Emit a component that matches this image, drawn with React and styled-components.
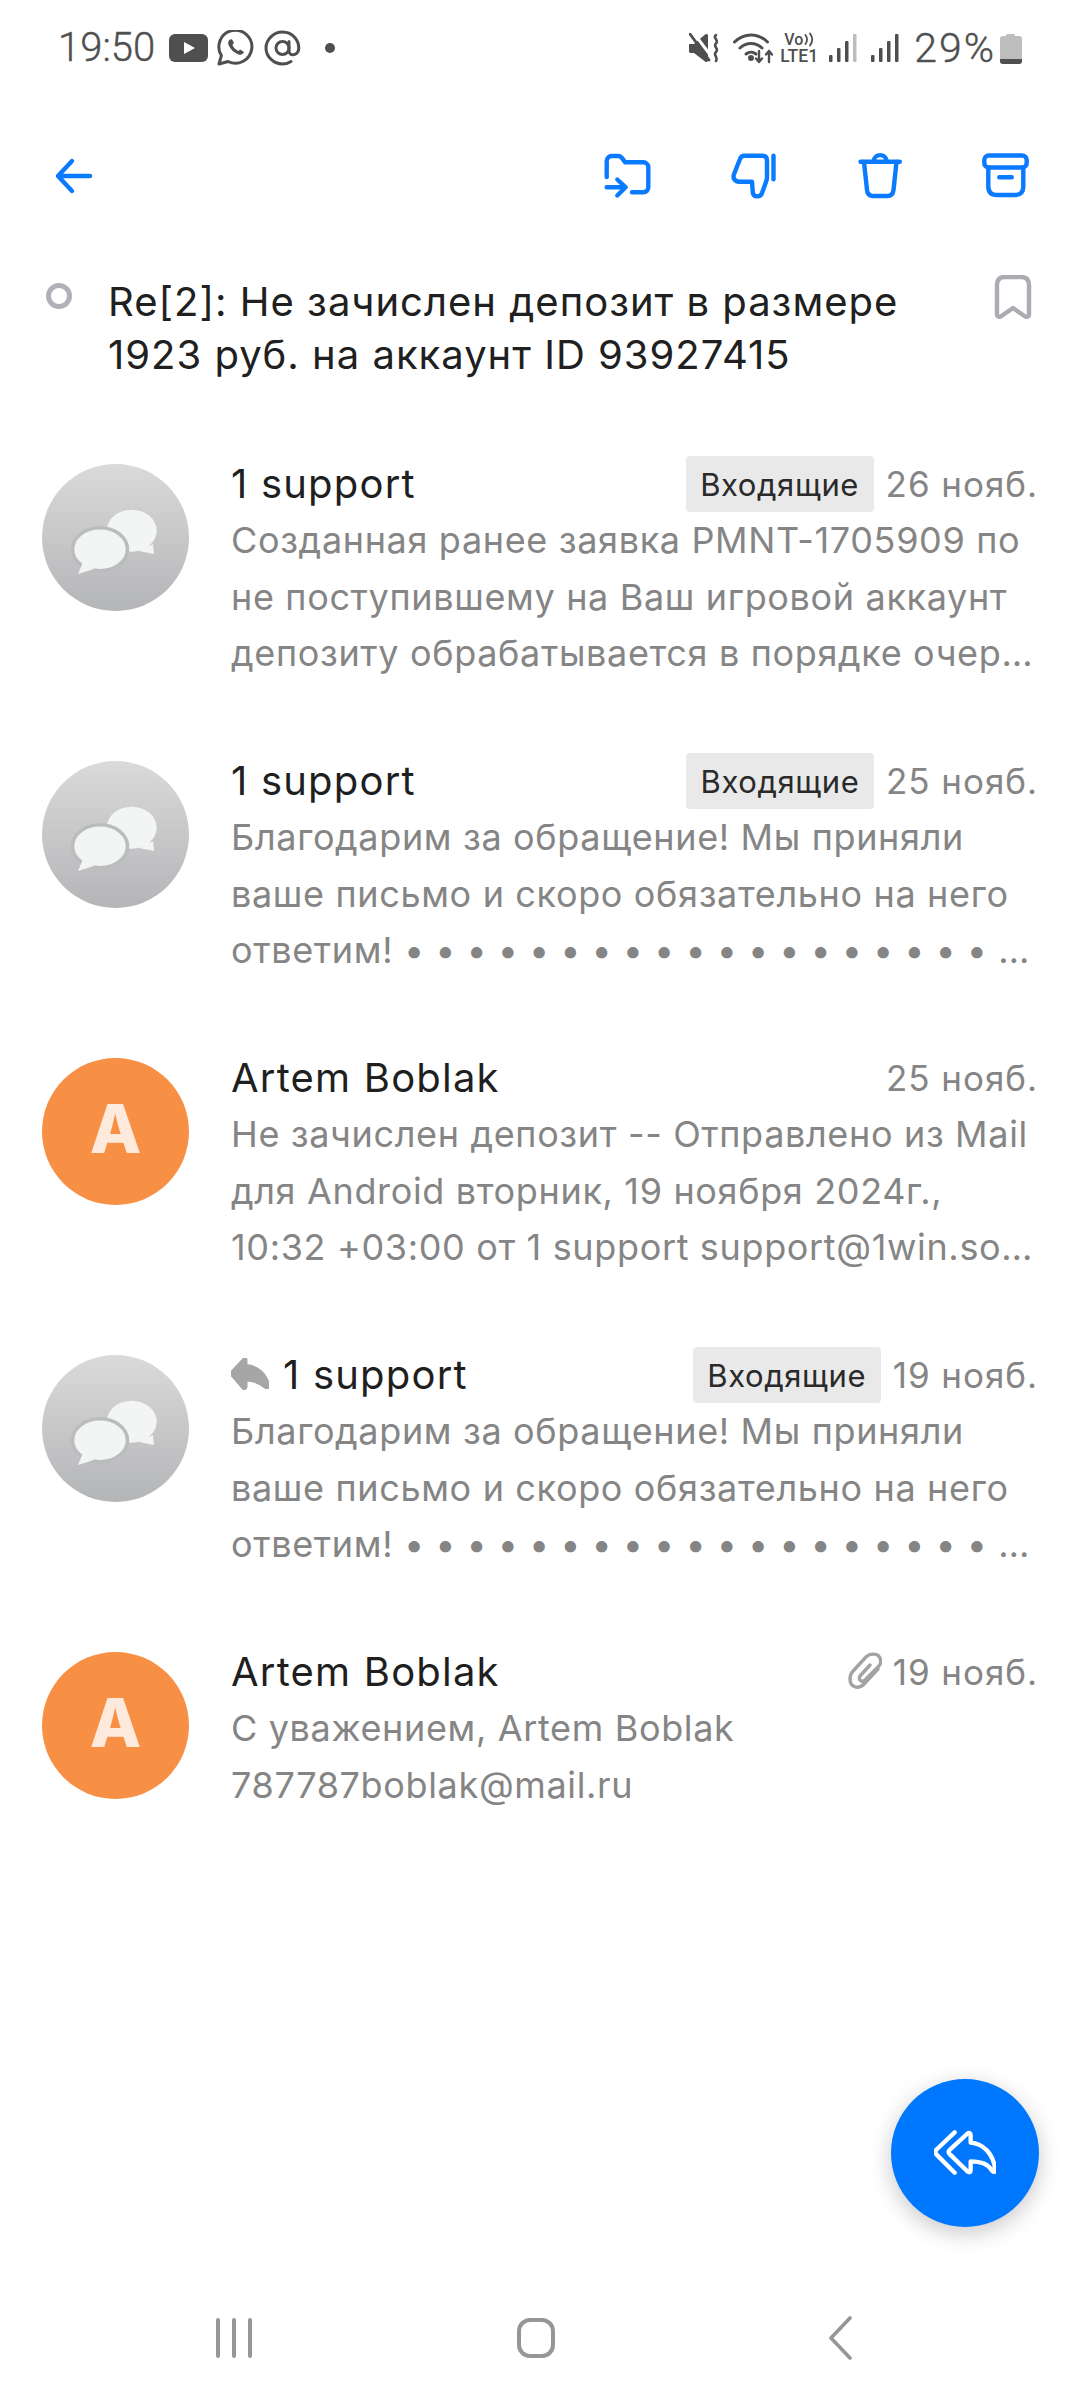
import React from "react";
import styled, { createGlobalStyle } from "styled-components";

const GlobalStyle = createGlobalStyle`
  html, body { margin: 0; padding: 0; background: #fff; }
  * { box-sizing: border-box; }
`;

const Page = styled.div`
  position: relative;
  width: 1080px;
  height: 2400px;
  display: flex;
  flex-direction: column;
  background: #fff;
  overflow: hidden;
  font-family: Inter, "Noto Sans", sans-serif;
`;

const StatusBar = styled.div`
  height: 96px;
  padding: 0 58px 0 58px;
  display: flex;
  align-items: center;
  justify-content: space-between;
  color: #4f4f4f;
  font-family: Roboto, sans-serif;
  font-size: 40px;
`;

const StatusGroup = styled.div`
  display: flex;
  align-items: center;
`;

const StatusSlot = styled.span`
  display: flex;
  margin-left: ${(p) => p.$left || 0}px;
`;

const StatusText = styled.span`
  line-height: 48px;
  font-weight: 300;
  font-size: ${(p) => (p.$wide ? 41 : 40)}px;
  letter-spacing: ${(p) => (p.$wide ? 2 : 0)}px;
  -webkit-text-stroke: 0.4px #4f4f4f;
`;

const Volte = styled.div`
  width: 40px;
  display: flex;
  flex-direction: column;
  align-items: center;
  font-weight: 500;
  color: #4f4f4f;
`;

const VolteTop = styled.div`
  display: flex;
  align-items: center;
  gap: 1px;
  height: 16px;
  font-size: 16px;
  line-height: 16px;
`;

const VolteBottom = styled.div`
  height: 17px;
  font-size: 17.5px;
  line-height: 17px;
`;

const Toolbar = styled.div`
  height: 160px;
  padding: 0 51px 0 54px;
  display: flex;
  align-items: center;
  justify-content: space-between;
`;

const ToolbarActions = styled.div`
  display: flex;
  gap: 78px;
`;

const Stroke = styled.svg`
  display: block;
  fill: none;
  stroke: ${(p) => p.$color || "#0a7aff"};
  stroke-width: ${(p) => p.$sw || 4.4};
  stroke-linecap: round;
  stroke-linejoin: round;
`;

const Subject = styled.div`
  padding: 19px 48px 73px 46px;
  display: flex;
  align-items: flex-start;
`;

const UnreadRing = styled.div`
  flex: none;
  width: 26px;
  height: 26px;
  margin-top: 8px;
  border: 5px solid #b0b1b6;
  border-radius: 50%;
`;

const SubjectText = styled.div`
  flex: 1;
  margin-left: 36px;
  font-size: 40px;
  line-height: 53px;
  letter-spacing: 1px;
  color: #202020;
`;

const List = styled.div`
  flex: 1;
`;

const Row = styled.div`
  height: 297px;
  padding: 0 42px;
  display: flex;
  gap: 42px;
`;

const AvatarCircle = styled.div`
  flex: none;
  width: 147px;
  height: 147px;
  margin-top: 10px;
  border-radius: 50%;
  display: flex;
  align-items: center;
  justify-content: center;
  background: ${(p) => (p.$orange ? "#f79044" : "linear-gradient(#dadada, #b4b5b7)")};
  padding-bottom: ${(p) => (p.$orange ? 6 : 0)}px;
  color: #fdeadd;
  font-size: 67px;
  font-weight: 800;
`;

const RowBody = styled.div`
  flex: 1;
  min-width: 0;
`;

const RowHead = styled.div`
  height: 58px;
  display: flex;
  align-items: center;
`;

const Name = styled.div`
  flex: 1;
  font-size: 40px;
  letter-spacing: 1.2px;
  color: #1f1f1f;
`;

const Tag = styled.div`
  width: 188px;
  height: 56px;
  margin: 2px 12px 0 0;
  border-radius: 4px;
  background: #e9e9e9;
  color: #2a2a2a;
  font-size: 31px;
  letter-spacing: 0.6px;
  display: flex;
  align-items: center;
  justify-content: center;
`;

const DateText = styled.div`
  margin-top: 1px;
  font-size: 35px;
  letter-spacing: 0.95px;
  color: #858585;
`;

const PreviewLine = styled.div`
  height: 56.5px;
  line-height: 56.5px;
  font-size: 36px;
  letter-spacing: 0.65px;
  color: #858585;
  white-space: nowrap;
`;

const Dots = styled.span`
  letter-spacing: 0.45px;
`;

const Fab = styled.div`
  position: absolute;
  right: 41px;
  bottom: 173px;
  width: 148px;
  height: 148px;
  border-radius: 50%;
  background: #0077ff;
  box-shadow: 0 6px 22px rgba(0, 0, 0, 0.22);
  display: flex;
  align-items: center;
  justify-content: center;
`;

const NavBar = styled.div`
  height: 124px;
  padding: 0 228px 0 216px;
  display: flex;
  align-items: center;
  justify-content: space-between;
`;

const NavBars = styled.div`
  width: 36px;
  height: 40px;
  display: flex;
  justify-content: space-between;
`;

const NavBarLine = styled.div`
  width: 4px;
  border-radius: 2px;
  background: #969696;
`;

const NavHome = styled.div`
  width: 38px;
  height: 40px;
  margin-right: 8px;
  border: 4px solid #969696;
  border-radius: 13px;
`;

const YoutubeIcon = () => (
  <svg width="39" height="28" viewBox="0 0 39 28">
    <rect width="39" height="28" rx="6" fill="#4f4f4f" />
    <path d="M15 8l11 6-11 6z" fill="#fff" />
  </svg>
);

const WhatsappIcon = () => (
  <Stroke $color="#4f4f4f" $sw="3" width="38" height="36" viewBox="0 0 38 36">
    <path d="M2 34l2.400-8.500A16.500 16.500 0 1 1 11 31.500z" />
    <path d="M13 9.500c-2 1.500-2.500 3.500-1 6.500 2 4 5.500 7 9.500 8.500 2.500.8 4.500 0 5.500-2.500l-3.800-2.600-2 1.500c-2.500-1-4.800-3.300-5.800-5.800l1.500-2-2-3.800z" fill="#4f4f4f" stroke="none" />
  </Stroke>
);

const AtIcon = () => (
  <Stroke $color="#4f4f4f" $sw="3" width="37" height="36" viewBox="0 0 37 36">
    <circle cx="18.500" cy="18" r="6.500" />
    <path d="M25 11.500V21c0 5 7.500 5 9.500-.500C36 11 29 2 18.500 2 9.500 2 2 9.500 2 18s7.500 16 16.500 16c3.500 0 6-.8 8.500-2.500" />
  </Stroke>
);

const MuteIcon = () => (
  <svg width="30" height="30" viewBox="0 0 30 30">
    <path d="M0 11h5L16 1.500c1-1 3-.5 3 1v25c0 1.500-2 2-3 1L5 20H1.500C.5 20 0 19.300 0 18z" fill="#4f4f4f" />
    <path d="M4 -1L25 27" stroke="#fff" strokeWidth="3" />
    <path d="M1 1L20 27" stroke="#4f4f4f" strokeWidth="2.800" strokeLinecap="round" />
    <path d="M27 2c-4 3 3.500 5 0 8.500-3.500 3 3.500 5 0 8.500-3.500 3 2.500 5 0 9" fill="none" stroke="#4f4f4f" strokeWidth="2.600" strokeLinecap="round" />
  </svg>
);

const WifiIcon = () => (
  <Stroke $color="#4f4f4f" $sw="3" width="41" height="32" viewBox="0 0 41 32">
    <path d="M1.500 10C11 .5 25 .5 34.500 10" />
    <path d="M7 16c6.500-6 15.500-6 22 0" />
    <path d="M13 22c3-2.500 7-2.500 10 0" />
    <circle cx="18" cy="26" r="1.500" fill="#4f4f4f" />
    <path d="M26 19v11M23 26.500l3 3.500 3-3.500" strokeWidth="2.400" />
    <path d="M36 30V19M33 22.500l3-3.500 3 3.500" strokeWidth="2.400" />
  </Stroke>
);

const VolteWaves = () => (
  <Stroke $color="#4f4f4f" $sw="1.800" width="10" height="15" viewBox="0 0 10 15">
    <path d="M1.500 3c2 3 2 6 0 9M6 1.500c3 4 3 8 0 12" />
  </Stroke>
);

const SignalIcon = ({ weak }) => (
  <svg width="28" height="30" viewBox="0 0 28 30">
    <rect x="0" y="22" width="3.500" height="7" rx="1" fill="#4f4f4f" />
    <rect x="8" y="15" width="3.500" height="14" rx="1" fill="#4f4f4f" />
    <rect x="16" y="8" width="3.500" height="21" rx="1" fill="#4f4f4f" />
    <rect x="24" y="1" width="3.500" height="28" rx="1" fill={weak ? "#bdbdbd" : "#4f4f4f"} />
  </svg>
);

const BatteryIcon = () => (
  <svg width="22" height="31" viewBox="0 0 22 31">
    <path d="M6 3c0-1.500.7-2 2-2h5c1.300 0 2 .5 2 2h4c2 0 3 1 3 3v22c0 2-1 3-3 3H3c-2 0-3-1-3-3V6c0-2 1-3 3-3z" fill="#bdbdbd" />
    <path d="M0 26h22v2c0 2-1 3-3 3H3c-2 0-3-1-3-3z" fill="#4f4f4f" />
  </svg>
);

const BackIcon = () => (
  <Stroke width="40" height="40" viewBox="0 0 40 40">
    <path d="M36 20H4M18 5L4 20l14 15" />
  </Stroke>
);

const FolderIcon = () => (
  <Stroke width="48" height="48" viewBox="0 0 48 48">
    <path d="M3.700 25V9a5 5 0 0 1 5-5h6.500c1.500 0 2.500.6 3.500 1.700l3.500 4.600h18.100a5 5 0 0 1 5 5v20a5 5 0 0 1-5 5H29" />
    <path d="M3.700 35.300h18.800M14.300 27.500l8.400 7.800-8.400 8.200" />
  </Stroke>
);

const ThumbIcon = () => (
  <Stroke width="48" height="48" viewBox="2 0 48 48">
    <path d="M17 3.700h18.500c2.800 0 4.500 1.700 4.500 4.500V25c0 1.800-.3 3.400-1 5l-4 11c-1.500 4.500-8.500 4.600-9.200-.4L25 29.700H12c-4.300 0-6.400-4-5-7.500L13 7c.7-2 2-3.300 4-3.300z" />
    <path d="M46.500 3.700v23.600" />
  </Stroke>
);

const TrashIcon = () => (
  <Stroke width="48" height="48" viewBox="-1.500 0 48 48">
    <path d="M4 9.700h39.300M17.300 9.500c0-8.500 12.700-8.500 12.700 0" />
    <path d="M7.500 10l3 28c.4 3.800 2.400 6 6 6h14.500c3.600 0 5.600-2.200 6-6l3-28" />
  </Stroke>
);

const ArchiveIcon = () => (
  <Stroke width="48" height="48" viewBox="0 0 48 48">
    <rect x="3.300" y="3.500" width="42.400" height="12" rx="4.500" />
    <path d="M7.300 15.500v19c0 5.500 3 8.500 8.500 8.500h18c5.500 0 8.500-3 8.500-8.500v-19" />
    <path d="M18.300 25.300h12.400" />
  </Stroke>
);

const BookmarkIcon = () => (
  <Stroke $color="#abacb1" $sw="4.400" width="38" height="44" viewBox="0 0 38 44">
    <path d="M3 10c0-5 2.500-8 8-8h16c5.500 0 8 3 8 8v29c0 3-2.500 3.500-4.500 2L19 33 7.500 41C5.500 42.500 3 42 3 39z" />
  </Stroke>
);

const ChatBubbles = () => (
  <svg width="147" height="147" viewBox="0 0 147 147">
    <ellipse cx="89.700" cy="66.700" rx="25" ry="21" fill="#f3f4f4" />
    <path d="M104 80c3 3 5 1 7 0l1 10-15-3c3-2 5-4 7-7z" fill="#f3f4f4" />
    <ellipse cx="58" cy="85.300" rx="27.500" ry="21.500" fill="#f3f4f4" stroke="#bbbcbd" strokeWidth="3.500" />
    <path d="M41 98l-5 12 16-5z" fill="#f3f4f4" />
  </svg>
);

const ReplyMark = () => (
  <svg width="38" height="32" viewBox="0 0 38 32" style={{ marginRight: 14 }}>
    <path d="M13 1L1 14c-.7 1-.7 2 0 3l11 13c1 1.200 3 .5 3-1v-7c7 0 13 2 19 7 2 1.500 4 .5 3.500-2C35 16 26 8 15 7.500V2c0-1.500-1-2-2-1z" fill="#a6a6a6" stroke="#a6a6a6" strokeWidth="3" />
  </svg>
);

const ClipIcon = () => (
  <Stroke $color="#a3a3a3" $sw="3.400" width="34" height="38" viewBox="0 0 34 38" style={{ marginRight: 11 }}>
    <path d="M30 17L16 32c-6 6-14 3-14-5 0-4 1-6 4-9L18 5c4-4 12-4 14 1 2 4 0 7-2 9L17 28c-3 3-7 0-5-4l10-11" />
  </Stroke>
);

const FabIcon = () => (
  <Stroke $color="#fff" $sw="4.600" width="62" height="46" viewBox="0 0 66 48">
    <path d="M22 2L3 20c-2 2-2 4 0 6l19 19" />
    <path d="M36 3L17 20.500c-2 1.500-2 3.500 0 5L36 44c1.500 1 3 .2 3-1.500V33c10 0 19 3 23 10 2 2 3.500 1 3.300-1C63 24 52 14 39 13V5c0-2-1.500-3-3-2z" />
  </Stroke>
);

const NavBack = () => (
  <Stroke $color="#969696" $sw="3.600" width="24" height="44" viewBox="0 0 24 44">
    <path d="M22 2L3 22l19 20" />
  </Stroke>
);

const DOTS = "• • • • • • • • • • • • • • • • • • • …";

const messages = [
  {
    name: "1 support",
    tag: true,
    date: "26 нояб.",
    lines: [
      "Созданная ранее заявка PMNT-1705909 по",
      "не поступившему на Ваш игровой аккаунт",
      "депозиту обрабатывается в порядке очер…",
    ],
  },
  {
    name: "1 support",
    tag: true,
    date: "25 нояб.",
    lines: ["Благодарим за обращение! Мы приняли", "ваше письмо и скоро обязательно на него"],
    dots: "ответим! ",
  },
  {
    name: "Artem Boblak",
    orange: true,
    date: "25 нояб.",
    lines: [
      "Не зачислен депозит -- Отправлено из Mail",
      "для Android вторник, 19 ноября 2024г.,",
      "10:32 +03:00 от 1 support support@1win.so…",
    ],
  },
  {
    name: "1 support",
    tag: true,
    replied: true,
    date: "19 нояб.",
    lines: ["Благодарим за обращение! Мы приняли", "ваше письмо и скоро обязательно на него"],
    dots: "ответим! ",
  },
  {
    name: "Artem Boblak",
    orange: true,
    clip: true,
    date: "19 нояб.",
    lines: ["С уважением, Artem Boblak", "787787boblak@mail.ru"],
  },
];

const MessageRow = ({ name, orange, tag, replied, clip, date, lines, dots }) => (
  <Row>
    <AvatarCircle $orange={orange}>{orange ? "A" : <ChatBubbles />}</AvatarCircle>
    <RowBody>
      <RowHead>
        {replied && <ReplyMark />}
        <Name>{name}</Name>
        {tag && <Tag>Входящие</Tag>}
        {clip && <ClipIcon />}
        <DateText>{date}</DateText>
      </RowHead>
      {lines.map((line) => (
        <PreviewLine key={line}>{line}</PreviewLine>
      ))}
      {dots && (
        <PreviewLine>
          {dots}
          <Dots>{DOTS}</Dots>
        </PreviewLine>
      )}
    </RowBody>
  </Row>
);

export default function App() {
  return (
    <Page>
      <GlobalStyle />
      <StatusBar>
        <StatusGroup>
          <StatusText>19:50</StatusText>
          <StatusSlot $left={14}>
            <YoutubeIcon />
          </StatusSlot>
          <StatusSlot $left={9}>
            <WhatsappIcon />
          </StatusSlot>
          <StatusSlot $left={9}>
            <AtIcon />
          </StatusSlot>
          <StatusSlot $left={24}>
            <svg width="10" height="10" viewBox="0 0 10 10">
              <circle cx="5" cy="5" r="5" fill="#4f4f4f" />
            </svg>
          </StatusSlot>
        </StatusGroup>
        <StatusGroup>
          <MuteIcon />
          <StatusSlot $left={14}>
            <WifiIcon />
          </StatusSlot>
          <StatusSlot $left={5}>
            <Volte>
              <VolteTop>
                Vo
                <VolteWaves />
              </VolteTop>
              <VolteBottom>LTE1</VolteBottom>
            </Volte>
          </StatusSlot>
          <StatusSlot $left={10}>
            <SignalIcon weak />
          </StatusSlot>
          <StatusSlot $left={14}>
            <SignalIcon />
          </StatusSlot>
          <StatusSlot $left={15}>
            <StatusText $wide>29%</StatusText>
          </StatusSlot>
          <StatusSlot $left={4}>
            <BatteryIcon />
          </StatusSlot>
        </StatusGroup>
      </StatusBar>
      <Toolbar>
        <BackIcon />
        <ToolbarActions>
          <FolderIcon />
          <ThumbIcon />
          <TrashIcon />
          <ArchiveIcon />
        </ToolbarActions>
      </Toolbar>
      <Subject>
        <UnreadRing />
        <SubjectText>
          Re[2]: Не зачислен депозит в размере
          <br />
          1923 руб. на аккаунт ID 93927415
        </SubjectText>
        <BookmarkIcon />
      </Subject>
      <List>
        {messages.map((m) => (
          <MessageRow key={m.date + m.name} {...m} />
        ))}
      </List>
      <Fab>
        <FabIcon />
      </Fab>
      <NavBar>
        <NavBars>
          <NavBarLine />
          <NavBarLine />
          <NavBarLine />
        </NavBars>
        <NavHome />
        <NavBack />
      </NavBar>
    </Page>
  );
}
